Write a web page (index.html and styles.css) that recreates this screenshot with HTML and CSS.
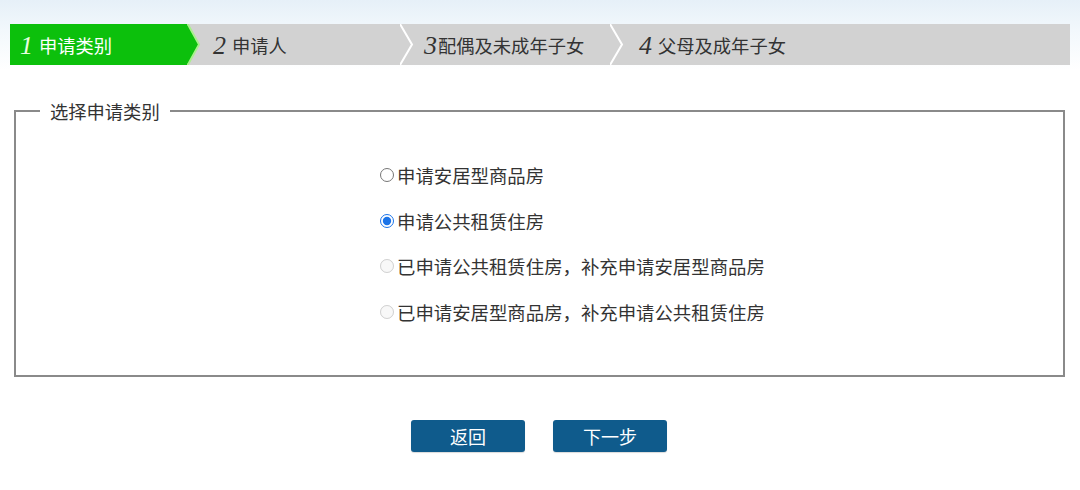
FILE: index.html
```html
<!DOCTYPE html>
<html lang="zh-CN">
<head>
<meta charset="utf-8">
<title>申请类别</title>
<link rel="stylesheet" href="styles.css">
</head>
<body>
<div class="page">
  <div class="steps">
    <div class="step step-active">
      <span class="num">1</span><span class="label">申请类别</span>
      <svg class="tip" width="14" height="41" viewBox="0 0 14 41"><polygon points="0,0 1,0 12,20.5 1,41 0,41" fill="#0cc00c"/><polyline points="0,0.5 1,0.5 12,20.5 1,40.5 0,40.5" fill="none" stroke="#a8f08c" stroke-width="2"/></svg>
    </div>
    <div class="step step-2">
      <span class="num">2</span><span class="label">申请人</span>
      <svg class="chev" width="14" height="41" viewBox="0 0 14 41"><polyline points="0,0 12,20.5 0,41" fill="none" stroke="#ffffff" stroke-width="2"/></svg>
    </div>
    <div class="step step-3">
      <span class="num">3</span><span class="label">配偶及未成年子女</span>
      <svg class="chev" width="14" height="41" viewBox="0 0 14 41"><polyline points="0,0 12,20.5 0,41" fill="none" stroke="#ffffff" stroke-width="2"/></svg>
    </div>
    <div class="step step-4">
      <span class="num">4</span><span class="label">父母及成年子女</span>
    </div>
  </div>

  <fieldset class="category">
    <legend class="category-title">选择申请类别</legend>
    <div class="options">
      <label class="option"><input type="radio" name="cat" class="radio">申请安居型商品房</label>
      <label class="option"><input type="radio" name="cat" class="radio" checked>申请公共租赁住房</label>
      <label class="option"><input type="radio" name="cat" class="radio" disabled>已申请公共租赁住房，补充申请安居型商品房</label>
      <label class="option"><input type="radio" name="cat" class="radio" disabled>已申请安居型商品房，补充申请公共租赁住房</label>
    </div>
  </fieldset>

  <div class="actions">
    <button class="btn" type="button">返回</button>
    <button class="btn" type="button">下一步</button>
  </div>
</div>
</body>
</html>
```

FILE: styles.css
```css
html, body {
  margin: 0;
  padding: 0;
}
body {
  background: linear-gradient(to bottom, #e6f0f8 0px, #f2f8fc 30px, #ffffff 70px);
  font-family: "Noto Sans CJK SC", "Noto Sans", sans-serif;
  color: #333333;
  height: 490px;
  overflow: hidden;
}
.page {
  padding-top: 24px;
}
.steps {
  margin: 0 10px;
  height: 41px;
  background: #d2d2d2;
  display: flex;
  align-items: stretch;
}
.step {
  position: relative;
  display: flex;
  align-items: center;
  font-size: 18px;
  line-height: 24px;
  color: #333333;
}
.step-active {
  width: 179px;
  padding-left: 10px;
  box-sizing: border-box;
  background: #0cc00c;
  color: #ffffff;
}
.step-2 {
  width: 213px;
  padding-left: 24px;
  box-sizing: border-box;
}
.step-3 {
  width: 210px;
  padding-left: 22px;
  box-sizing: border-box;
}
.step-4 {
  flex: 1;
  padding-left: 27px;
}
.label {
  font-size: 18.3px;
}
.num {
  font-family: "Liberation Serif", "DejaVu Serif", serif;
  font-style: italic;
  font-size: 26px;
  margin-right: 6px;
  position: relative;
  top: 1px;
}
.step-active .num {
  color: #e8ffe0;
  font-weight: 300;
}
.step-3 .num {
  margin-right: 1px;
}
.tip {
  position: absolute;
  top: 0;
  right: -12px;
  z-index: 2;
}
.chev {
  position: absolute;
  top: 0;
  right: -12px;
  z-index: 2;
}

.category {
  margin: 34px 15px 0 14px;
  padding: 0;
  border: 2px solid #8a8a8a;
  min-width: 0;
}
.category-title {
  margin-left: 24px;
  padding: 0 10px;
  font-size: 18.3px;
  line-height: 24px;
  color: #333333;
}
.options {
  display: flex;
  flex-direction: column;
  gap: 21.7px;
  padding: 40px 0 51px 364px;
}
.option {
  display: flex;
  align-items: center;
  font-size: 18.4px;
  line-height: 24px;
  color: #333333;
}
.radio {
  width: 14px;
  height: 14px;
  margin: 0 3px 0 0;
  accent-color: #1a73e8;
}

.actions {
  display: flex;
  justify-content: center;
  gap: 28px;
  margin-top: 43px;
  padding-right: 2px;
}
.btn {
  width: 114px;
  height: 32px;
  border: none;
  border-radius: 3px;
  background: #0f5b8c;
  color: #ffffff;
  font-family: "Noto Sans CJK SC", "Noto Sans", sans-serif;
  font-size: 18px;
  line-height: 24px;
  padding: 0;
  box-shadow: 0 1px 1px rgba(0,0,0,0.15);
}
```
